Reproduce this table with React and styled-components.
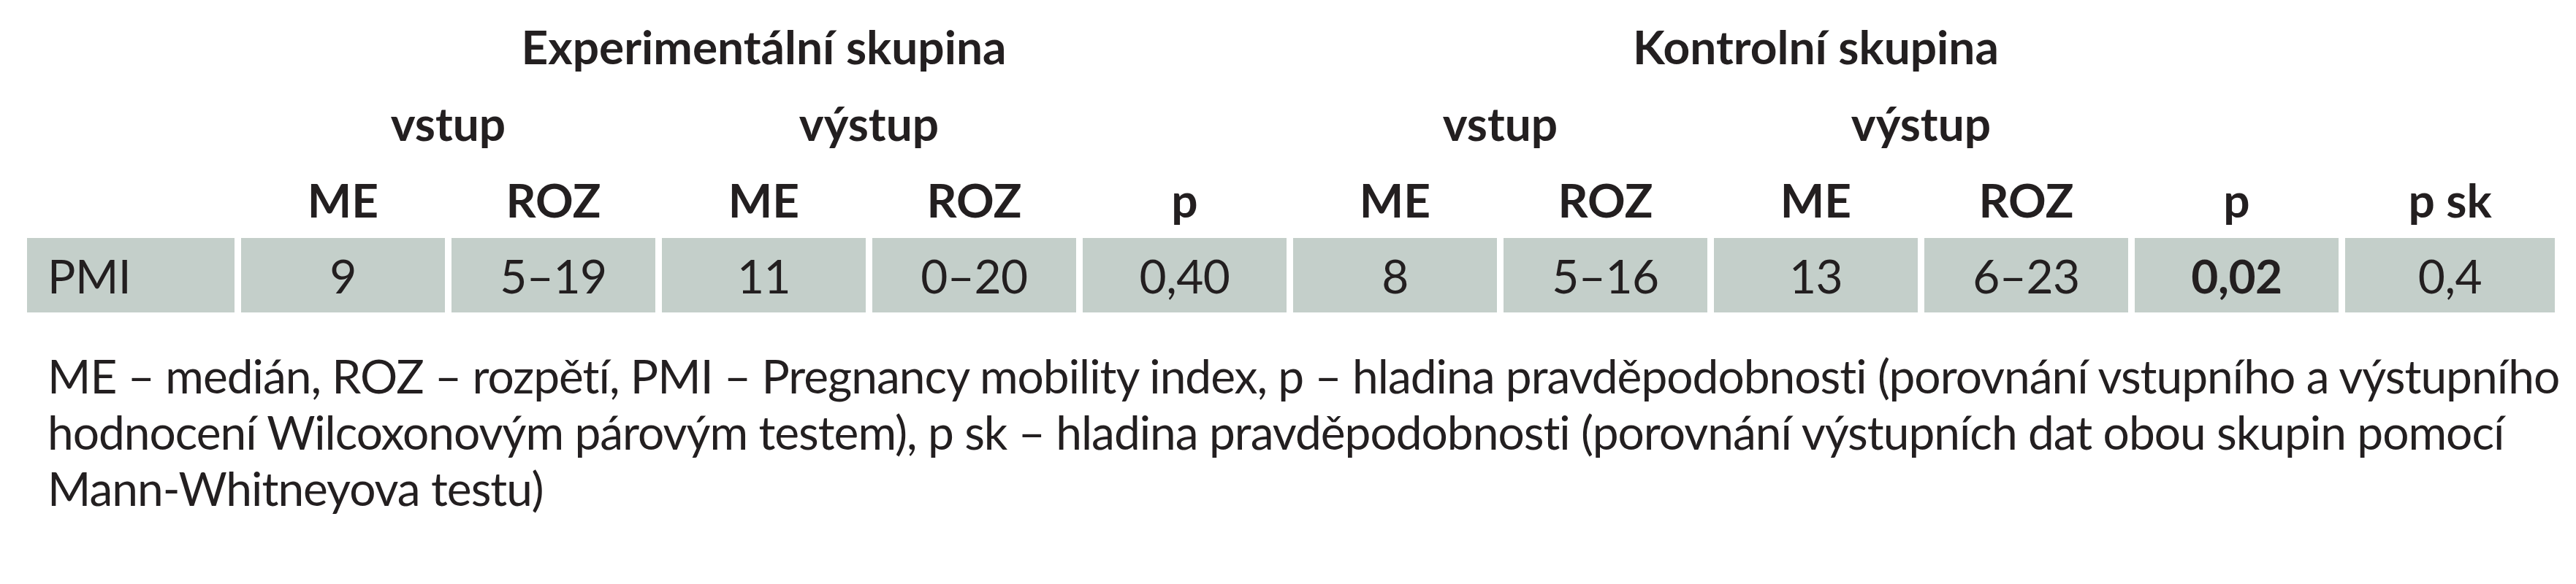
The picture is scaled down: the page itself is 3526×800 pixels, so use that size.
import React from 'react';
import styled, { createGlobalStyle } from 'styled-components';

const Global = createGlobalStyle`
    html, body {
        margin: 0;
        padding: 0;
        background: #ffffff;
    }
    body {
        font-family: Lato, "Open Sans", "Liberation Sans", sans-serif;
        color: #231f20;
    }
`;

const Page = styled.div`
    width: 3526px;
    height: 800px;
    padding: 11px 0 0 37px;
    box-sizing: border-box;
    overflow: hidden;
`;

const Table = styled.div`
    display: grid;
    grid-template-columns: 284px repeat(10, 279px) 287px;
    grid-template-rows: 105px 105px 105px 102px;
    column-gap: 9px;
    font-size: 64px;
`;

const Head = styled.div`
    grid-column: ${p => p.$col};
    grid-row: ${p => p.$row};
    text-align: center;
    font-weight: 700;
    line-height: 105px;
    white-space: nowrap;
`;

const Cell = styled.div`
    grid-row: 4;
    background: #c4cfca;
    line-height: 100px;
    padding: 2px ${p => (p.$first ? '0 0 28px' : '0')};
    text-align: ${p => (p.$first ? 'left' : 'center')};
    font-weight: ${p => (p.$bold ? 700 : 400)};
    letter-spacing: -0.5px;
    white-space: nowrap;
`;

const Note = styled.p`
    margin: 48px 0 0 28px;
    font-size: 64px;
    line-height: 77px;
    letter-spacing: -1px;
    white-space: nowrap;
`;

const heads = ['ME', 'ROZ', 'ME', 'ROZ', 'p', 'ME', 'ROZ', 'ME', 'ROZ', 'p', 'p sk'];
const row = [
    { v: '9' }, { v: '5–19' }, { v: '11' }, { v: '0–20' }, { v: '0,40' },
    { v: '8' }, { v: '5–16' }, { v: '13' }, { v: '6–23' }, { v: '0,02', bold: true }, { v: '0,4' },
];

const App = () => (
    <>
        <Global />
        <Page>
            <Table>
                <Head $row={1} $col="2 / 7">Experimentální skupina</Head>
                <Head $row={1} $col="7 / 12">Kontrolní skupina</Head>

                <Head $row={2} $col="2 / 4">vstup</Head>
                <Head $row={2} $col="4 / 6">výstup</Head>
                <Head $row={2} $col="7 / 9">vstup</Head>
                <Head $row={2} $col="9 / 11">výstup</Head>

                {heads.map((h, i) => (
                    <Head key={i} $row={3} $col={i + 2}>{h}</Head>
                ))}

                <Cell $first>PMI</Cell>
                {row.map((c, i) => (
                    <Cell key={i} $bold={c.bold}>{c.v}</Cell>
                ))}
            </Table>

            <Note>
                ME – medián, ROZ – rozpětí, PMI – Pregnancy mobility index, p – hladina pravděpodobnosti (porovnání vstupního a výstupního<br />
                hodnocení Wilcoxonovým párovým testem), p sk – hladina pravděpodobnosti (porovnání výstupních dat obou skupin pomocí<br />
                Mann-Whitneyova testu)
            </Note>
        </Page>
    </>
);

export default App;
